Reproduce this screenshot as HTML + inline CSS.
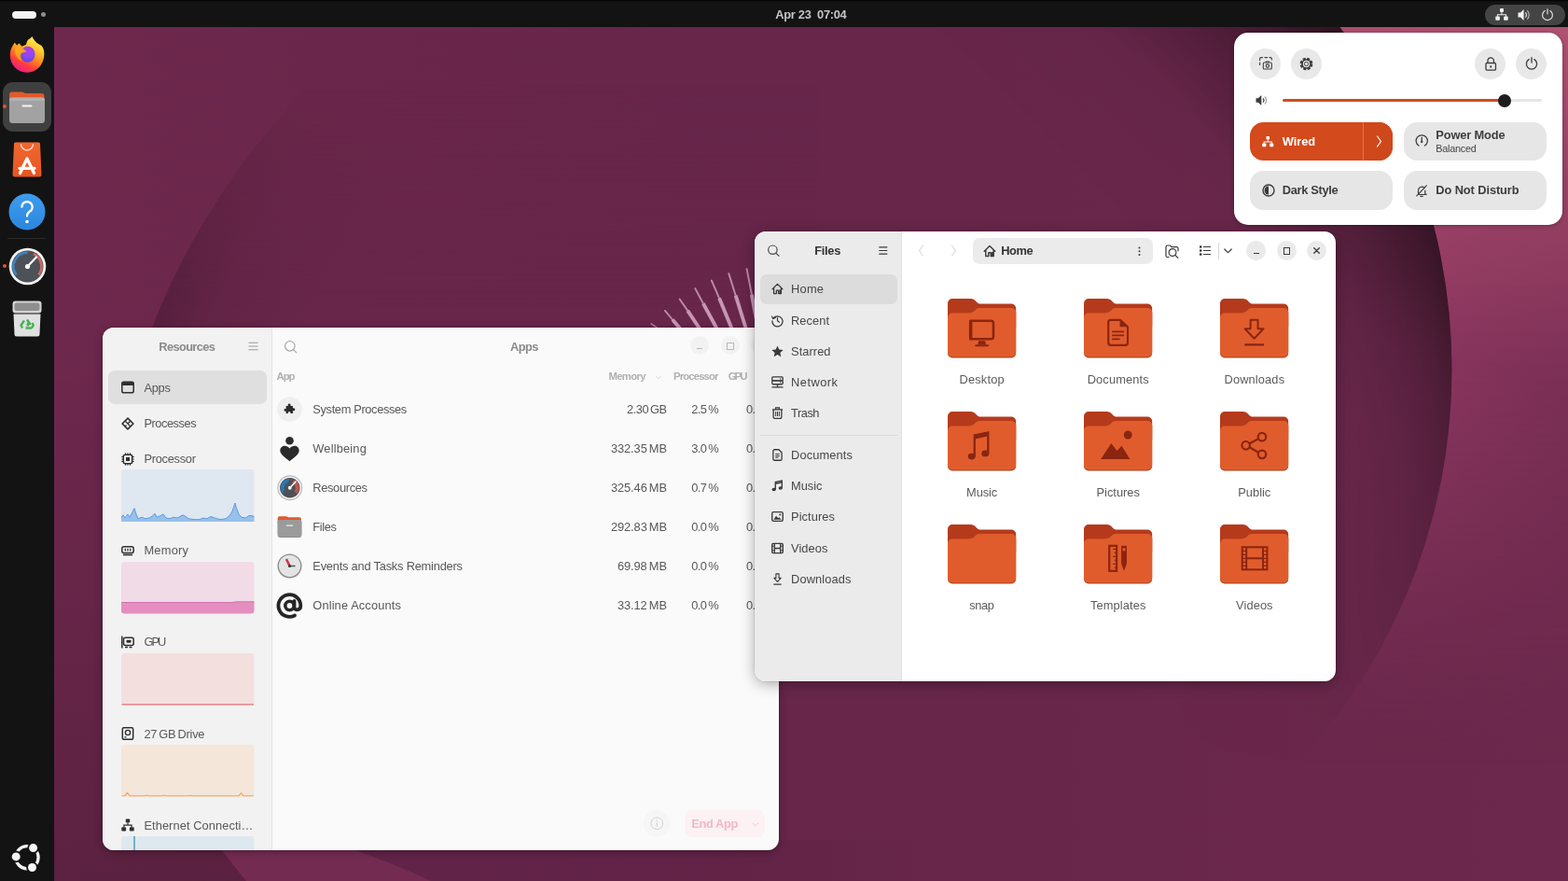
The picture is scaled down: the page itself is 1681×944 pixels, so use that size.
<!DOCTYPE html>
<html lang="en"><head><meta charset="utf-8"><title>Ubuntu Desktop</title>
<style>
html,body{margin:0;padding:0}
body{width:1681px;height:944px;overflow:hidden;position:relative;background:#67264a;font-family:"Liberation Sans",sans-serif;}
.a{position:absolute}
.t{position:absolute;white-space:pre}
svg{position:absolute;overflow:visible}
.win{position:absolute;overflow:hidden}
.in{position:absolute}
#root{position:absolute;left:0;top:0;width:1681px;height:944px;overflow:hidden;will-change:transform}
</style></head><body><div id="root">
<svg class="a" style="left:0;top:0" width="1681" height="944" viewBox="0 0 1681 944">
<defs>
<radialGradient id="gOut" gradientUnits="userSpaceOnUse" cx="935" cy="396" r="1000">
<stop offset="0.6215" stop-color="#8b365f"/><stop offset="0.68" stop-color="#84335a"/><stop offset="0.80" stop-color="#772d53"/><stop offset="1" stop-color="#6e294e"/>
</radialGradient>
<linearGradient id="gOutTop" gradientUnits="userSpaceOnUse" x1="1681" y1="0" x2="1560" y2="380">
<stop offset="0" stop-color="#c45e7a" stop-opacity="0.8"/><stop offset="1" stop-color="#c05a78" stop-opacity="0"/>
</linearGradient>
<radialGradient id="gIn" gradientUnits="userSpaceOnUse" cx="935" cy="396" r="621.5">
<stop offset="0" stop-color="#000" stop-opacity="0"/><stop offset="0.72" stop-color="#000" stop-opacity="0"/><stop offset="0.84" stop-color="#000" stop-opacity="0.055"/><stop offset="0.92" stop-color="#000" stop-opacity="0.15"/><stop offset="0.97" stop-color="#000" stop-opacity="0.26"/><stop offset="1" stop-color="#000" stop-opacity="0.36"/>
</radialGradient>
<linearGradient id="gRm" gradientUnits="userSpaceOnUse" x1="0" y1="0" x2="0" y2="1000">
<stop offset="0" stop-color="#fff" stop-opacity="1"/><stop offset="0.30" stop-color="#fff" stop-opacity="1"/><stop offset="0.45" stop-color="#fff" stop-opacity="0.78"/><stop offset="0.56" stop-color="#fff" stop-opacity="0.5"/><stop offset="0.66" stop-color="#fff" stop-opacity="0.25"/><stop offset="0.74" stop-color="#fff" stop-opacity="0.08"/><stop offset="0.82" stop-color="#fff" stop-opacity="0"/>
</linearGradient>
<mask id="mR" maskUnits="userSpaceOnUse" x="0" y="0" width="1681" height="944"><rect x="0" y="0" width="1681" height="944" fill="url(#gRm)"/></mask>
<radialGradient id="gL" gradientUnits="userSpaceOnUse" cx="877" cy="631" r="767">
<stop offset="0" stop-color="#000" stop-opacity="0"/><stop offset="0.80" stop-color="#000" stop-opacity="0"/><stop offset="0.93" stop-color="#000" stop-opacity="0.06"/><stop offset="1" stop-color="#000" stop-opacity="0.17"/>
</radialGradient>
<linearGradient id="gLm" gradientUnits="userSpaceOnUse" x1="0" y1="90" x2="0" y2="330">
<stop offset="0" stop-color="#fff" stop-opacity="0"/><stop offset="1" stop-color="#fff" stop-opacity="1"/>
</linearGradient>
<mask id="mL" maskUnits="userSpaceOnUse" x="0" y="0" width="1681" height="944"><rect x="0" y="0" width="1681" height="944" fill="url(#gLm)"/></mask>
<linearGradient id="gLeft" gradientUnits="userSpaceOnUse" x1="58" y1="0" x2="758" y2="0"><stop offset="0" stop-color="#6e284d"/><stop offset="0.4" stop-color="#6b274b"/><stop offset="1" stop-color="#67264a"/></linearGradient>
<linearGradient id="gBot" gradientUnits="userSpaceOnUse" x1="452" y1="0" x2="1000" y2="0"><stop offset="0" stop-color="#612347"/><stop offset="0.6" stop-color="#622347"/><stop offset="1" stop-color="#67264a"/></linearGradient>
<linearGradient id="gStrip" gradientUnits="userSpaceOnUse" x1="0" y1="300" x2="0" y2="944"><stop offset="0" stop-color="#000" stop-opacity="0"/><stop offset="0.15" stop-color="#000" stop-opacity="0.01"/><stop offset="0.6" stop-color="#000" stop-opacity="0.08"/><stop offset="1" stop-color="#000" stop-opacity="0.165"/></linearGradient>
<clipPath id="cTop"><rect x="0" y="0" width="1681" height="400"/></clipPath>
<linearGradient id="gLfill" gradientUnits="userSpaceOnUse" x1="58" y1="0" x2="758" y2="0"><stop offset="0" stop-color="#69264b"/><stop offset="0.5" stop-color="#67264a"/><stop offset="1" stop-color="#67264a"/></linearGradient>
<linearGradient id="gTopSh" gradientUnits="userSpaceOnUse" x1="1120" y1="160" x2="1320" y2="-40"><stop offset="0" stop-color="#000" stop-opacity="0"/><stop offset="0.4" stop-color="#000" stop-opacity="0.02"/><stop offset="0.7" stop-color="#000" stop-opacity="0.10"/><stop offset="1" stop-color="#000" stop-opacity="0.20"/></linearGradient>
<linearGradient id="gBR" gradientUnits="userSpaceOnUse" x1="1000" y1="0" x2="1681" y2="0"><stop offset="0" stop-color="#67264a"/><stop offset="1" stop-color="#6d294d"/></linearGradient>
<radialGradient id="gIn2" gradientUnits="userSpaceOnUse" cx="935" cy="396" r="621.5"><stop offset="0.70" stop-color="#000" stop-opacity="0"/><stop offset="0.82" stop-color="#000" stop-opacity="0.08"/><stop offset="0.93" stop-color="#000" stop-opacity="0.13"/><stop offset="1" stop-color="#000" stop-opacity="0.10"/></radialGradient>
<linearGradient id="gTm" gradientUnits="userSpaceOnUse" x1="0" y1="0" x2="0" y2="460"><stop offset="0" stop-color="#fff" stop-opacity="1"/><stop offset="0.5" stop-color="#fff" stop-opacity="1"/><stop offset="0.72" stop-color="#fff" stop-opacity="0.5"/><stop offset="1" stop-color="#fff" stop-opacity="0"/></linearGradient>
<mask id="mTop" maskUnits="userSpaceOnUse" x="0" y="0" width="1681" height="944"><rect x="0" y="0" width="1681" height="460" fill="url(#gTm)"/></mask>
<clipPath id="cOut"><path clip-rule="evenodd" d="M935 -300H1800V1100H935Z M935 -225.5 A621.5 621.5 0 0 1 935 1017.5 Z"/></clipPath>
</defs>
<rect width="1681" height="944" fill="#67264a"/>
<rect x="1000" y="0" width="681" height="944" fill="url(#gBR)"/>
<rect x="58" y="29" width="700" height="915" fill="url(#gLeft)"/>
<g mask="url(#mL)" clip-path="url(#cTop)"><path d="M877 -136A767 767 0 0 0 110 631H877Z" fill="url(#gLfill)"/><path d="M877 -136A767 767 0 0 0 110 631H877Z" fill="url(#gL)"/></g>
<rect x="58" y="300" width="300" height="644" fill="url(#gStrip)"/>
<path d="M229 900C241 915 254 932 264 944H462C425 926 380 910 345 900Z" fill="#742b52"/>
<path d="M345 900C380 910 425 926 462 944H1000V900Z" fill="url(#gBot)"/>
<g mask="url(#mR)">
<g clip-path="url(#cOut)"><rect x="935" y="0" width="746" height="944" fill="url(#gOut)"/><rect x="935" y="0" width="746" height="944" fill="url(#gOutTop)"/></g>
<path d="M935 -225.5 A621.5 621.5 0 0 1 935 1017.5 Z" fill="url(#gIn)"/>
<path d="M935 -225.5 A621.5 621.5 0 0 1 935 1017.5 Z" fill="url(#gTopSh)"/>
<g mask="url(#mTop)"><path d="M935 -225.5 A621.5 621.5 0 0 1 935 1017.5 Z" fill="url(#gIn2)"/></g>
</g>
<g stroke-linecap="round"><line x1="698.1" y1="346.8" x2="705" y2="351.5" stroke="#b583a3" stroke-width="1.400"/><line x1="712.9" y1="332.9" x2="721" y2="342.5" stroke="#be8aab" stroke-width="1.900"/><line x1="721" y1="342.5" x2="729" y2="352" stroke="#c696b4" stroke-width="3.900" stroke-linecap="butt"/><line x1="728.6" y1="320.5" x2="737.2" y2="332.9" stroke="#be8aab" stroke-width="1.900"/><line x1="737.2" y1="332.9" x2="750" y2="352" stroke="#c696b4" stroke-width="3.900" stroke-linecap="butt"/><line x1="745.3" y1="309.1" x2="753.9" y2="325.3" stroke="#be8aab" stroke-width="1.900"/><line x1="753.9" y1="325.3" x2="768.5" y2="352" stroke="#c696b4" stroke-width="3.900" stroke-linecap="butt"/><line x1="762.8" y1="300.5" x2="771.1" y2="319.6" stroke="#be8aab" stroke-width="1.900"/><line x1="771.1" y1="319.6" x2="784.5" y2="352" stroke="#c696b4" stroke-width="3.900" stroke-linecap="butt"/><line x1="781.3" y1="293.1" x2="788.7" y2="316.7" stroke="#be8aab" stroke-width="1.900"/><line x1="788.7" y1="316.7" x2="799.7" y2="352" stroke="#c696b4" stroke-width="3.900" stroke-linecap="butt"/><line x1="800.6" y1="288.1" x2="805.9" y2="315.8" stroke="#be8aab" stroke-width="1.900"/><line x1="805.9" y1="315.8" x2="812.5" y2="351" stroke="#c696b4" stroke-width="3.900" stroke-linecap="butt"/></g>
</svg>
<div class="a" style="left:0;top:0;width:1681px;height:29px;background:#131313"></div>
<div class="a" style="left:0;top:0;width:1681px;height:2px;background:linear-gradient(#000,#131313)"></div>
<div class="a" style="left:13px;top:12px;width:25.5px;height:7.5px;border-radius:4px;background:#f4f4f4"></div>
<div class="a" style="left:43.8px;top:13.2px;width:5px;height:5px;border-radius:3px;background:#8e8e8e"></div>
<span class="t" style="left:831.25px;top:8px;font-size:12.84px;line-height:15px;color:#c4c4c4;font-weight:700;letter-spacing:-0.281px;">Apr 23  07:04</span>
<div class="a" style="left:1592px;top:4.5px;width:85.5px;height:22.5px;border-radius:11.5px;background:#444"></div>
<svg class="a" style="left:1602px;top:8px" width="16" height="15" viewBox="0 0 16 15" fill="#f2f2f2">
<rect x="6" y="1" width="4" height="4" rx="1"/><rect x="1.3" y="9.5" width="4.6" height="4.2" rx="0.8"/><rect x="10.1" y="9.5" width="4.6" height="4.2" rx="0.8"/>
<path d="M7.5 5h1v2.3h4.6v2.4h-1V8.3H3.9v1.4h-1V7.3h4.6z"/></svg>
<svg class="a" style="left:1627px;top:8.5px" width="15" height="14" viewBox="0 0 15 14" fill="#f2f2f2">
<path d="M0.5 4.6h2.6L6.6 1v12L3.1 9.4H0.5z"/><path d="M8.3 4.4a3.6 3.6 0 0 1 0 5.2" fill="none" stroke="#f2f2f2" stroke-width="1.1"/><path d="M10.3 2.4a6.4 6.4 0 0 1 0 9.2" fill="none" stroke="#bdbdbd" stroke-width="1.1"/></svg>
<svg class="a" style="left:1652px;top:8.5px" width="14" height="14" viewBox="0 0 14 14" fill="none" stroke="#e0e0e0" stroke-width="1.2" stroke-linecap="round">
<path d="M4.2 2.6a5.4 5.4 0 1 0 5.6 0"/><path d="M7 0.8v5.2"/></svg>

<div class="a" style="left:0;top:29px;width:58px;height:915px;background:#131313"></div>
<!-- firefox -->
<svg class="a" style="left:9px;top:38px" width="40" height="40" viewBox="0 0 40 40">
<defs><linearGradient id="ffa" x1="0.78" y1="0.05" x2="0.3" y2="1"><stop offset="0" stop-color="#fff44f"/><stop offset="0.28" stop-color="#ffc52e"/><stop offset="0.52" stop-color="#ff8a1c"/><stop offset="0.76" stop-color="#ff3d3d"/><stop offset="1" stop-color="#e81a8c"/></linearGradient>
<radialGradient id="ffb" cx="0.55" cy="0.25" r="0.85"><stop offset="0" stop-color="#bb36e4"/><stop offset="0.45" stop-color="#8b4cf2"/><stop offset="1" stop-color="#5a40dd"/></radialGradient>
<linearGradient id="ffc" x1="0" y1="0" x2="1" y2="1"><stop offset="0" stop-color="#ffb01f"/><stop offset="1" stop-color="#ff8a16"/></linearGradient></defs>
<path d="M25.3 0.900C27 4 28.500 6 30.400 7.900C32 9 34 9.500 35.500 11.100C37.500 13.500 38.400 16 38.400 19.500C38.400 31 30.500 39.700 20 39.700C9.500 39.700 1.800 31.500 1.800 21C1.800 16 3.500 12 6.900 7.600C7.500 9 8.300 10 9.400 10.600C10 9.600 11 8.800 12 8.500C12.600 9.800 13.500 11 14.500 11.700C16 11.200 17.600 10.600 19 9.800C19.400 7.500 20.300 5.800 20.900 4.700C22.500 3.800 24.200 2.500 25.300 0.900Z" fill="url(#ffa)"/>
<ellipse cx="20.800" cy="20.200" rx="7.700" ry="8.600" fill="url(#ffb)"/>
<path d="M7.500 13C11 11.500 14.500 12.500 16.500 14.800L19.800 17.300C17 17.700 14.300 18.600 13.300 20.300C12.300 22.300 12.800 24.800 14.500 27C9.500 26 6 20.500 7.500 13Z" fill="url(#ffc)"/>
</svg>
<!-- files (active) -->
<div class="a" style="left:2.5px;top:88px;width:52.5px;height:52.5px;border-radius:11px;background:#3f3f3f"></div>
<div class="a" style="left:3.3px;top:112.4px;width:4px;height:4px;border-radius:2px;background:#e2572a"></div>
<svg class="a" style="left:9px;top:97px" width="40" height="36" viewBox="0 0 40 36">
<path d="M1 4.500a3 3 0 0 1 3-3h10.500c1.500 0 2.500 1.500 4 1.500h17a3 3 0 0 1 3 3v6H1Z" fill="#e2592b"/>
<rect x="1" y="7.600" width="38" height="27.400" rx="3.500" fill="#a2a2a2"/>
<rect x="1" y="7.600" width="38" height="3.500" rx="1.700" fill="#bdbdbd" opacity="0.6"/>
<rect x="14.500" y="15.500" width="11" height="2" rx="1" fill="#f4f4f4"/>
</svg>
<!-- app center -->
<svg class="a" style="left:13px;top:152px" width="32" height="38" viewBox="0 0 32 38">
<defs><linearGradient id="ac" x1="0" y1="0" x2="0" y2="1"><stop offset="0" stop-color="#f0682f"/><stop offset="1" stop-color="#e95420"/></linearGradient></defs>
<path d="M3.500 0.500h25a1.500 1.500 0 0 1 1.500 1.500l1.500 33a2.500 2.500 0 0 1-2.500 2.500H3a2.500 2.500 0 0 1-2.500-2.500L2 2a1.500 1.500 0 0 1 1.500-1.500Z" fill="url(#ac)"/>
<path d="M9.500 2.500a6.500 6.500 0 0 0 13 0" fill="none" stroke="#fbe3d6" stroke-width="1.400"/>
<path d="M16 18L8.500 33.500M16 18L23.500 33.500M8 28.300h16" fill="none" stroke="#fff" stroke-width="3.300" stroke-linecap="round"/>
</svg>
<!-- help -->
<svg class="a" style="left:9px;top:207px" width="40" height="40" viewBox="0 0 40 40">
<defs><linearGradient id="hp" x1="0" y1="0" x2="0" y2="1"><stop offset="0" stop-color="#3f9dec"/><stop offset="1" stop-color="#2a86de"/></linearGradient></defs>
<circle cx="20" cy="20" r="19.500" fill="url(#hp)"/>
<path d="M14.500 14.500a5.600 5.600 0 1 1 8.500 5c-2 1.300-3 2.500-3 5" fill="none" stroke="#fff" stroke-width="2.300" stroke-linecap="round"/>
<circle cx="20" cy="30.500" r="1.800" fill="#fff"/>
</svg>
<div class="a" style="left:8px;top:255px;width:41px;height:1px;background:#292929"></div>
<!-- resources -->
<div class="a" style="left:3.3px;top:283.400px;width:4px;height:4px;border-radius:2px;background:#e2572a"></div>
<svg class="a" style="left:8.500px;top:265px" width="41" height="41" viewBox="0 0 41 41">
<circle cx="20.500" cy="20.500" r="19.800" fill="#f2f2f2"/>
<circle cx="20.500" cy="20.500" r="17" fill="#4d5258"/>
<path d="M8.500 29.500A15 15 0 0 1 20.500 5.500" fill="none" stroke="#3d86c0" stroke-width="2.600"/>
<path d="M27 7A15 15 0 0 1 32.500 29.500" fill="none" stroke="#cf6a60" stroke-width="2.600"/>
<path d="M20.500 20.500L30 10.500" stroke="#fff" stroke-width="2.200" stroke-linecap="round"/>
<circle cx="20.500" cy="20.500" r="2.600" fill="#fff"/>
</svg>
<!-- trash -->
<svg class="a" style="left:13px;top:322px" width="32" height="39" viewBox="0 0 32 39">
<rect x="0.500" y="0.500" width="31" height="13" rx="3" fill="#d4d4d4"/>
<rect x="2.500" y="2.500" width="27" height="8.500" rx="2.500" fill="#8f8f8f"/>
<path d="M1.500 14.500h29l-1 21.500a2.500 2.500 0 0 1-2.500 2.500H5a2.500 2.500 0 0 1-2.500-2.500Z" fill="#e0e0e0"/>
<path d="M16 20.500l3 4.500h-2.200v2.500M11 29.500l-1.500-3 3.500-5M21 29.500h-6.500M21 29.500l1.800-3-1.500-2.300" fill="none" stroke="#43b352" stroke-width="2.400" stroke-linejoin="round"/>
</svg>
<!-- show apps (ubuntu logo) -->
<svg class="a" style="left:12px;top:902px" width="34" height="34" viewBox="0 0 34 34">
<circle cx="17" cy="16.700" r="12.100" fill="none" stroke="#f4f4f4" stroke-width="3.300"/>
<g fill="#131313"><circle cx="23.600" cy="6.600" r="6.300"/><circle cx="5.200" cy="15.900" r="6.300"/><circle cx="22.500" cy="27.500" r="6.300"/></g>
<g fill="#f4f4f4"><circle cx="23.600" cy="6.600" r="4.500"/><circle cx="5.200" cy="15.900" r="4.500"/><circle cx="22.500" cy="27.500" r="4.500"/></g>
</svg>

<div class="a" style="left:110px;top:351px;width:725px;height:560px;border-radius:12px;box-shadow:0 2px 10px rgba(0,0,0,.28),0 0 0 1px rgba(0,0,0,.10)"></div>
<div class="win" style="left:110px;top:351px;width:725px;height:560px;border-radius:12px;background:#fafafa"><div class="in" style="left:-110px;top:-351px">
<div class="a" style="left:110px;top:351px;width:181px;height:560px;background:#f2f2f2"></div>
<div class="a" style="left:290.5px;top:351px;width:1px;height:560px;background:#e4e4e4"></div>
<span class="t" style="left:170.35px;top:364px;font-size:12.84px;line-height:15px;color:#8a8a8a;font-weight:700;letter-spacing:-0.639px;">Resources</span>
<svg style="left:265.5px;top:365.5px" width="11" height="10" viewBox="0 0 11 10"><path d="M0.5 1.2h10M0.5 5h10M0.5 8.800h10" stroke="#9c9c9c" stroke-width="1.100"/></svg>
<svg style="left:303.500px;top:363.500px" width="15" height="15" viewBox="0 0 15 15" fill="none" stroke="#a6a6a6" stroke-width="1.200"><circle cx="6.800" cy="6.800" r="5.300"/><path d="M10.600 10.600l3.200 3.200" stroke-linecap="round"/></svg>
<span class="t" style="left:546.95px;top:364px;font-size:12.84px;line-height:15px;color:#8a8a8a;font-weight:700;letter-spacing:-0.526px;">Apps</span>
<div class="a" style="left:740px;top:360.300px;width:20px;height:20px;border-radius:10px;background:#f2f2f2"></div>
<div class="a" style="left:772.5px;top:360.300px;width:20px;height:20px;border-radius:10px;background:#f2f2f2"></div>
<div class="a" style="left:805px;top:360.300px;width:20px;height:20px;border-radius:10px;background:#f2f2f2"></div>
<div class="a" style="left:746.500px;top:372.800px;width:6.500px;height:1px;background:#b8b8b8"></div>
<div class="a" style="left:779.200px;top:367px;width:5.500px;height:5.500px;border:1px solid #b8b8b8;box-sizing:content-box"></div>
<div class="a" style="left:116px;top:397px;width:170px;height:36px;border-radius:7px;background:#dfdfdf"></div>
<svg style="left:129.500px;top:408px" width="14" height="14" viewBox="0 0 14 14"><rect x="0.800" y="1.300" width="12.400" height="11.400" rx="1.800" fill="none" stroke="#2f2f2f" stroke-width="1.500"/><rect x="0.800" y="1.300" width="12.400" height="3.600" rx="1" fill="#2f2f2f"/></svg>
<span class="t" style="left:154.40px;top:408px;font-size:12.84px;line-height:15px;color:#585858;letter-spacing:-0.250px;">Apps</span>
<svg style="left:129.500px;top:446.500px" width="14" height="14" viewBox="0 0 14 14"><path d="M7 1.100L12.900 7 7 12.900 1.100 7Z" fill="none" stroke="#2f2f2f" stroke-width="1.600" stroke-linejoin="round"/><path d="M4.300 4.300l5.400 5.400M9.700 4.300L7 7M4.300 9.700L5.500 8.500" stroke="#2f2f2f" stroke-width="1.300"/></svg>
<span class="t" style="left:154.40px;top:446px;font-size:12.84px;line-height:15px;color:#585858;letter-spacing:-0.461px;">Processes</span>
<svg style="left:129.500px;top:485px" width="14" height="14" viewBox="0 0 14 14"><rect x="2.300" y="2.300" width="9.400" height="9.400" rx="2" fill="none" stroke="#2f2f2f" stroke-width="1.500"/><rect x="5" y="5" width="4" height="4" fill="#2f2f2f"/><path d="M4.500 0.300v2M7 0.300v2M9.500 0.300v2M4.500 11.700v2M7 11.700v2M9.500 11.700v2M0.300 4.500h2M0.300 7h2M0.300 9.500h2M11.700 4.500h2M11.700 7h2M11.700 9.500h2" stroke="#2f2f2f" stroke-width="1"/></svg>
<span class="t" style="left:154.40px;top:484px;font-size:12.84px;line-height:15px;color:#585858;letter-spacing:-0.269px;">Processor</span>
<svg style="left:129.500px;top:583px" width="14" height="14" viewBox="0 0 14 14"><rect x="0.800" y="2.800" width="12.400" height="6.600" rx="2" fill="none" stroke="#2f2f2f" stroke-width="1.500"/><path d="M4.300 4.800v2.600M7 4.800v2.600M9.700 4.800v2.600" stroke="#2f2f2f" stroke-width="1.300"/><path d="M2 11.500h10" stroke="#2f2f2f" stroke-width="1.600"/></svg>
<span class="t" style="left:154.40px;top:582px;font-size:12.84px;line-height:15px;color:#585858;letter-spacing:0.254px;">Memory</span>
<svg style="left:129.500px;top:681px" width="14" height="14" viewBox="0 0 14 14"><path d="M0.800 0.500v13" stroke="#2f2f2f" stroke-width="1.500"/><rect x="2.500" y="2.300" width="10.700" height="8.200" rx="2" fill="none" stroke="#2f2f2f" stroke-width="1.500"/><rect x="5.500" y="4.800" width="5" height="3" rx="0.800" fill="#2f2f2f"/><path d="M4 12.500h3M8.500 12.500h3" stroke="#2f2f2f" stroke-width="1.500"/></svg>
<span class="t" style="left:154.40px;top:680px;font-size:12.84px;line-height:15px;color:#585858;letter-spacing:-1.906px;">GPU</span>
<svg style="left:129.500px;top:779px" width="14" height="14" viewBox="0 0 14 14"><rect x="1.300" y="0.800" width="11.400" height="12.400" rx="1.500" fill="none" stroke="#2f2f2f" stroke-width="1.500"/><circle cx="7" cy="6" r="2.600" fill="none" stroke="#2f2f2f" stroke-width="1.400"/><path d="M3.500 10.800h2" stroke="#2f2f2f" stroke-width="1.300"/></svg>
<span class="t" style="left:154.40px;top:779px;font-size:12.84px;line-height:15px;color:#585858;letter-spacing:-0.287px;word-spacing:-1px;">27 GB Drive</span>
<svg style="left:129.500px;top:877px" width="14" height="14" viewBox="0 0 14 14" fill="#2f2f2f"><rect x="4.800" y="0.500" width="4.400" height="4" rx="0.800"/><rect x="0.300" y="9.300" width="4.800" height="4.200" rx="0.800"/><rect x="8.900" y="9.300" width="4.800" height="4.200" rx="0.800"/><path d="M6.400 4.500h1.200v2h4.100v2.800h-1.200V7.700H3.500v1.600H2.300V6.500h4.100z"/></svg>
<span class="t" style="left:154.40px;top:877px;font-size:12.84px;line-height:15px;color:#585858;letter-spacing:0.086px;">Ethernet Connecti…</span>
<svg style="left:129.500px;top:503px" width="142.500" height="56" viewBox="0 0 142.500 56"><rect width="142.500" height="56" rx="3.500" fill="#dfe7f1"/><path d="M0,51.2 L2,48.8 L4,52.0 L7,48.0 L9,51.2 L12,45.6 L14,41.6 L16,48.0 L18,52.8 L22,51.2 L26,52.8 L30,52.0 L34,49.6 L36,47.2 L38,51.2 L42,49.6 L45,48.0 L48,52.0 L52,52.8 L56,51.2 L60,52.0 L63,50.4 L66,48.8 L69,50.4 L72,52.8 L78,53.6 L84,53.6 L88,52.0 L92,52.8 L96,50.4 L100,52.0 L106,53.6 L112,52.8 L116,49.6 L119,44.8 L122,36.0 L123,40.0 L126,48.0 L129,51.2 L133,52.0 L137,49.6 L140,49.6 L142.5,50.4 L142.500,56 L0,56Z" fill="#8fbbe9" opacity="0.9"/><polyline points="0,51.2 2,48.8 4,52.0 7,48.0 9,51.2 12,45.6 14,41.6 16,48.0 18,52.8 22,51.2 26,52.8 30,52.0 34,49.6 36,47.2 38,51.2 42,49.6 45,48.0 48,52.0 52,52.8 56,51.2 60,52.0 63,50.4 66,48.8 69,50.4 72,52.8 78,53.6 84,53.6 88,52.0 92,52.8 96,50.4 100,52.0 106,53.6 112,52.8 116,49.6 119,44.8 122,36.0 123,40.0 126,48.0 129,51.2 133,52.0 137,49.6 140,49.6 142.5,50.4" fill="none" stroke="#5c9ee0" stroke-width="1"/></svg>
<svg style="left:129.500px;top:601.5px" width="142.500" height="55.5" viewBox="0 0 142.500 55.5"><rect width="142.500" height="55.5" rx="3.500" fill="#f1dbe6"/><path d="M0 43.500H118L124 42.800H142.500V52a3.500 3.500 0 0 1-3.500 3.500H3.500A3.500 3.500 0 0 1 0 52Z" fill="#e58fc1"/><path d="M0 43.500H118L124 42.800H142.500" fill="none" stroke="#cf72ad" stroke-width="1"/></svg>
<svg style="left:129.500px;top:699.5px" width="142.500" height="56" viewBox="0 0 142.500 56"><rect width="142.500" height="56" rx="3.500" fill="#f4dfdf"/><path d="M0.500 54.800H142" fill="none" stroke="#e0747c" stroke-width="1.200"/></svg>
<svg style="left:129.500px;top:797.5px" width="142.500" height="56" viewBox="0 0 142.500 56"><rect width="142.500" height="56" rx="3.500" fill="#f5e6da"/><path d="M0.500 54.700H4L6.500 51.500 9 54.700H25L27 54 29 54.700H44L46 54 48 54.700H72L74 54.200 76 54.700H126L128.500 51.800 131 54.700H142" fill="none" stroke="#f0a458" stroke-width="1.100"/></svg>
<svg style="left:129.500px;top:895.5px" width="142.500" height="56" viewBox="0 0 142.500 56"><rect width="142.500" height="56" rx="3.500" fill="#dde9ee"/><path d="M14 0V20" stroke="#2c8fb4" stroke-width="1.200"/></svg>
<span class="t" style="left:296.50px;top:397px;font-size:11.3px;line-height:12px;color:#b0b0b0;font-weight:700;letter-spacing:-0.984px;">App</span>
<span class="t" style="left:652.50px;top:397px;font-size:11.3px;line-height:12px;color:#b0b0b0;font-weight:700;letter-spacing:-0.666px;">Memory</span>
<svg style="left:701.500px;top:402px" width="8" height="5" viewBox="0 0 8 5"><path d="M0.800 0.800L4 4 7.200 0.800" fill="none" stroke="#dcdcdc" stroke-width="1"/></svg>
<span class="t" style="left:722.00px;top:397px;font-size:11.3px;line-height:12px;color:#b0b0b0;font-weight:700;letter-spacing:-0.846px;">Processor</span>
<span class="t" style="left:780.80px;top:397px;font-size:11.3px;line-height:12px;color:#b0b0b0;font-weight:700;letter-spacing:-1.992px;">GPU</span>
<span class="t" style="left:335.30px;top:431px;font-size:12.84px;line-height:15px;color:#585858;letter-spacing:-0.349px;">System Processes</span>
<span class="t" style="left:672.00px;top:431px;font-size:12.84px;line-height:15px;color:#585858;letter-spacing:-0.464px;word-spacing:-1.3px;">2.30 GB</span>
<span class="t" style="left:741.30px;top:431px;font-size:12.84px;line-height:15px;color:#585858;letter-spacing:-0.628px;word-spacing:-1px;">2.5 %</span>
<span class="t" style="left:800.00px;top:431px;font-size:12.84px;line-height:15px;color:#585858;letter-spacing:-0.628px;word-spacing:-1px;">0.0 %</span>
<span class="t" style="left:335.30px;top:473px;font-size:12.84px;line-height:15px;color:#585858;letter-spacing:0.174px;">Wellbeing</span>
<span class="t" style="left:655.00px;top:473px;font-size:12.84px;line-height:15px;color:#585858;letter-spacing:-0.094px;word-spacing:-1.3px;">332.35 MB</span>
<span class="t" style="left:741.30px;top:473px;font-size:12.84px;line-height:15px;color:#585858;letter-spacing:-0.628px;word-spacing:-1px;">3.0 %</span>
<span class="t" style="left:800.00px;top:473px;font-size:12.84px;line-height:15px;color:#585858;letter-spacing:-0.628px;word-spacing:-1px;">0.0 %</span>
<span class="t" style="left:335.30px;top:515px;font-size:12.84px;line-height:15px;color:#585858;letter-spacing:-0.329px;">Resources</span>
<span class="t" style="left:655.00px;top:515px;font-size:12.84px;line-height:15px;color:#585858;letter-spacing:-0.094px;word-spacing:-1.3px;">325.46 MB</span>
<span class="t" style="left:741.30px;top:515px;font-size:12.84px;line-height:15px;color:#585858;letter-spacing:-0.628px;word-spacing:-1px;">0.7 %</span>
<span class="t" style="left:800.00px;top:515px;font-size:12.84px;line-height:15px;color:#585858;letter-spacing:-0.628px;word-spacing:-1px;">0.0 %</span>
<span class="t" style="left:335.30px;top:557px;font-size:12.84px;line-height:15px;color:#585858;letter-spacing:-0.348px;">Files</span>
<span class="t" style="left:655.00px;top:557px;font-size:12.84px;line-height:15px;color:#585858;letter-spacing:-0.094px;word-spacing:-1.3px;">292.83 MB</span>
<span class="t" style="left:741.30px;top:557px;font-size:12.84px;line-height:15px;color:#585858;letter-spacing:-0.628px;word-spacing:-1px;">0.0 %</span>
<span class="t" style="left:800.00px;top:557px;font-size:12.84px;line-height:15px;color:#585858;letter-spacing:-0.628px;word-spacing:-1px;">0.0 %</span>
<span class="t" style="left:335.30px;top:599px;font-size:12.84px;line-height:15px;color:#585858;letter-spacing:-0.208px;">Events and Tasks Reminders</span>
<span class="t" style="left:662.00px;top:599px;font-size:12.84px;line-height:15px;color:#585858;letter-spacing:-0.087px;word-spacing:-1.3px;">69.98 MB</span>
<span class="t" style="left:741.30px;top:599px;font-size:12.84px;line-height:15px;color:#585858;letter-spacing:-0.628px;word-spacing:-1px;">0.0 %</span>
<span class="t" style="left:800.00px;top:599px;font-size:12.84px;line-height:15px;color:#585858;letter-spacing:-0.628px;word-spacing:-1px;">0.0 %</span>
<span class="t" style="left:335.30px;top:641px;font-size:12.84px;line-height:15px;color:#585858;letter-spacing:0.128px;">Online Accounts</span>
<span class="t" style="left:662.00px;top:641px;font-size:12.84px;line-height:15px;color:#585858;letter-spacing:-0.087px;word-spacing:-1.3px;">33.12 MB</span>
<span class="t" style="left:741.30px;top:641px;font-size:12.84px;line-height:15px;color:#585858;letter-spacing:-0.628px;word-spacing:-1px;">0.0 %</span>
<span class="t" style="left:800.00px;top:641px;font-size:12.84px;line-height:15px;color:#585858;letter-spacing:-0.628px;word-spacing:-1px;">0.0 %</span>
<svg style="left:297.300px;top:425px" width="27" height="27" viewBox="0 0 27 27"><circle cx="13.500" cy="13.500" r="13.300" fill="#efefef"/><path transform="translate(13.5 14.2) scale(0.86) translate(-13.5 -13.5)" d="M9 8.500h2.600c-0.700-1.300 0-2.700 1.500-2.700s2.200 1.400 1.500 2.700h2.900v2.900c1.300-0.700 2.700 0 2.700 1.500s-1.400 2.200-2.700 1.500v3.600h-3c0.600-1.300-0.100-2.500-1.400-2.500s-2 1.200-1.400 2.500H9v-3c-1.300 0.600-2.500-0.100-2.500-1.400s1.200-2 2.500-1.400z" fill="#2b2b2b"/></svg>
<svg style="left:299.300px;top:466.500px" width="23" height="28" viewBox="0 0 23 28" fill="#2b2b2b"><circle cx="11.500" cy="5.300" r="4.300"/><path d="M11.500 27.300C7 23.500 1.300 20 1.300 15.800c0-3 2.300-5 5-5 2 0 3.900 1 5.200 2.700 1.300-1.700 3.200-2.700 5.200-2.700 2.700 0 5 2 5 5 0 4.200-5.700 7.700-10.200 11.500z"/></svg>
<svg style="left:297.100px;top:508.800px" width="27.500" height="27.500" viewBox="0 0 41 41"><circle cx="20.500" cy="20.500" r="20" fill="#b9b9b9"/><circle cx="20.500" cy="20.500" r="18.300" fill="#f2f2f2"/><circle cx="20.500" cy="20.500" r="16" fill="#4d5258"/><path d="M9 29.500A14.500 14.500 0 0 1 20.500 6z" fill="#2c78b0"/><path d="M27 7.500A14.500 14.500 0 0 1 32 29.500L20.500 20.500z" fill="#c7524a"/><circle cx="20.500" cy="20.500" r="9" fill="#4d5258"/><path d="M20.500 20.500L30 10.500" stroke="#fff" stroke-width="2.400" stroke-linecap="round"/><circle cx="20.500" cy="20.500" r="2.800" fill="#fff"/></svg>
<svg style="left:297.300px;top:552px" width="27" height="25" viewBox="0 0 40 36"><path d="M1 4.500a3 3 0 0 1 3-3h10.500c1.500 0 2.500 1.500 4 1.500h17a3 3 0 0 1 3 3v6H1Z" fill="#df5a2c"/><rect x="1" y="7" width="38" height="28" rx="3.500" fill="#8c8c8c"/><rect x="1" y="7" width="38" height="26.500" rx="3.500" fill="#9b9b9b"/><rect x="14.500" y="15" width="11" height="2" rx="1" fill="#eee"/></svg>
<svg style="left:297.300px;top:593px" width="27" height="27" viewBox="0 0 27 27"><circle cx="13.500" cy="13.500" r="13" fill="#8d8d8d"/><circle cx="13.500" cy="13.300" r="11.600" fill="#e4e4e4"/><path d="M13.500 13.500L10 6" stroke="#d0364a" stroke-width="2.600"/><path d="M13.500 13.500h6" stroke="#555" stroke-width="1.500"/><circle cx="13.500" cy="13.500" r="1.500" fill="#333"/></svg>
<svg style="left:296.300px;top:633.500px" width="29" height="30" viewBox="0 0 29 30" fill="none" stroke="#262626"><circle cx="14.500" cy="15" r="4.700" stroke-width="3.600"/><path d="M19.500 10v6.500c0 4 6.800 4 6.800-1.500A11.900 11.900 0 1 0 20 25.500" stroke-width="3.800" stroke-linecap="round"/></svg>
<div class="a" style="left:689.500px;top:868px;width:28.500px;height:28.500px;border-radius:15px;background:#f6f6f6"></div>
<svg style="left:696.500px;top:875px" width="14.500" height="14.500" viewBox="0 0 15 15"><circle cx="7.500" cy="7.500" r="6.600" fill="none" stroke="#d0d0d0" stroke-width="1"/><path d="M7.500 6.500v4.500" stroke="#d0d0d0" stroke-width="1.200"/><circle cx="7.500" cy="4.300" r="0.800" fill="#d0d0d0"/></svg>
<div class="a" style="left:733.700px;top:868px;width:86.500px;height:28.800px;border-radius:8px;background:#fcf1f3"></div>
<span class="t" style="left:741.30px;top:875px;font-size:12.84px;line-height:15px;color:#efb9c6;font-weight:700;letter-spacing:-0.378px;">End App</span>
<svg style="left:806px;top:880.500px" width="8" height="5" viewBox="0 0 8 5"><path d="M0.800 0.800L4 4 7.200 0.800" fill="none" stroke="#f0c9d2" stroke-width="1"/></svg>
</div></div>
<div class="a" style="left:809px;top:248.200px;width:623px;height:481.800px;border-radius:12px;box-shadow:0 3px 15px rgba(0,0,0,.32),0 0 0 1px rgba(0,0,0,.07)"></div>
<div class="win" style="left:809px;top:248.200px;width:623px;height:481.800px;border-radius:12px;background:#fff"><div class="in" style="left:-809px;top:-248.200px">
<div class="a" style="left:809px;top:248px;width:157.800px;height:483px;background:#ebebeb"></div>
<div class="a" style="left:966px;top:248px;width:1px;height:483px;background:#e2e2e2"></div>
<svg style="left:822px;top:261px" width="15" height="15" viewBox="0 0 15 15" fill="none" stroke="#4a4a4a" stroke-width="1.200"><circle cx="6.400" cy="6.700" r="4.700"/><path d="M9.800 10.100l3.200 3.100" stroke-linecap="round"/></svg>
<span class="t" style="left:873.30px;top:261px;font-size:12.84px;line-height:15px;color:#333;font-weight:700;letter-spacing:-0.309px;">Files</span>
<svg style="left:942px;top:264px" width="10" height="9" viewBox="0 0 10 9"><path d="M0.300 0.900h9M0.300 4.500h9M0.300 8.100h9" stroke="#3a3a3a" stroke-width="1.100"/></svg>
<div class="a" style="left:815px;top:294px;width:146.500px;height:31.500px;border-radius:7px;background:#dcdcdc"></div>
<svg style="left:827.200px;top:303.3px" width="13" height="13" viewBox="0 0 14 14"><path d="M1.200 7.300L7 1.500l5.800 5.800M2.800 6v6.500h3v-3.800h2.400v3.800h3V6" fill="none" stroke="#3a3a3a" stroke-width="1.400" stroke-linejoin="round" stroke-linecap="round"/><rect x="9" y="8" width="2.300" height="4.500" fill="#3a3a3a"/></svg>
<span class="t" style="left:848.00px;top:302px;font-size:12.84px;line-height:15px;color:#474747;letter-spacing:0.255px;">Home</span>
<svg style="left:827.200px;top:336.5px" width="13" height="13" viewBox="0 0 14 14"><path d="M2.200 4.300A6 6 0 1 1 1 7.500" fill="none" stroke="#3a3a3a" stroke-width="1.400" stroke-linecap="round"/><path d="M0.500 2.200l1.500 2.600 2.700-1" fill="none" stroke="#3a3a3a" stroke-width="1.300" stroke-linecap="round"/><path d="M7 3.800v3.500l2.200 1.500" fill="none" stroke="#3a3a3a" stroke-width="1.300" stroke-linecap="round"/></svg>
<span class="t" style="left:848.00px;top:336px;font-size:12.84px;line-height:15px;color:#474747;letter-spacing:0.069px;">Recent</span>
<svg style="left:827.200px;top:369.8px" width="13" height="13" viewBox="0 0 14 14"><path d="M7 0.600l1.950 4.300 4.650 0.500-3.500 3.100 1 4.600L7 10.700 2.900 13.100l1-4.600L0.400 5.400l4.650-0.500z" fill="#3a3a3a"/></svg>
<span class="t" style="left:848.00px;top:369px;font-size:12.84px;line-height:15px;color:#474747;letter-spacing:0.070px;">Starred</span>
<svg style="left:827.200px;top:403.0px" width="13" height="13" viewBox="0 0 14 14"><rect x="0.800" y="1" width="12.400" height="4.200" rx="1.200" fill="none" stroke="#3a3a3a" stroke-width="1.400"/><rect x="0.800" y="5.200" width="12.400" height="4.200" rx="1.200" fill="none" stroke="#3a3a3a" stroke-width="1.400"/><path d="M0.500 12.700h13M7 9.500v3" stroke="#3a3a3a" stroke-width="1.400"/><circle cx="10.500" cy="3.100" r="0.800" fill="#3a3a3a"/><circle cx="10.500" cy="7.300" r="0.800" fill="#3a3a3a"/></svg>
<span class="t" style="left:848.00px;top:402px;font-size:12.84px;line-height:15px;color:#474747;letter-spacing:0.490px;">Network</span>
<svg style="left:827.200px;top:436.3px" width="13" height="13" viewBox="0 0 14 14"><path d="M1 3h12M5 2.800V1h4v1.800" fill="none" stroke="#3a3a3a" stroke-width="1.400"/><path d="M2.300 3.200v8.600a1.500 1.500 0 0 0 1.500 1.500h6.400a1.500 1.500 0 0 0 1.500-1.500V3.200" fill="none" stroke="#3a3a3a" stroke-width="1.400"/><path d="M5 5.500v5.300M7 5.500v5.300M9 5.500v5.300" stroke="#3a3a3a" stroke-width="1.100"/></svg>
<span class="t" style="left:848.00px;top:435px;font-size:12.84px;line-height:15px;color:#474747;letter-spacing:-0.457px;">Trash</span>
<svg style="left:827.200px;top:481.0px" width="13" height="13" viewBox="0 0 14 14"><path d="M2 2.500A1.700 1.700 0 0 1 3.700 0.800H8.500L12 4.300v7.200a1.700 1.700 0 0 1-1.700 1.700H3.700A1.700 1.700 0 0 1 2 11.500Z" fill="none" stroke="#3a3a3a" stroke-width="1.400" stroke-linejoin="round"/><path d="M4.500 6h5M4.500 8h5M4.500 10h3.500" stroke="#3a3a3a" stroke-width="1.100"/></svg>
<span class="t" style="left:848.00px;top:480px;font-size:12.84px;line-height:15px;color:#474747;letter-spacing:0.139px;">Documents</span>
<svg style="left:827.200px;top:514.1px" width="13" height="13" viewBox="0 0 14 14"><path d="M4.600 11V2.800l7.600-1.600V9.500" fill="none" stroke="#3a3a3a" stroke-width="1.500"/><path d="M4.600 4.500l7.600-1.600" stroke="#3a3a3a" stroke-width="1.600"/><ellipse cx="2.900" cy="11.200" rx="2.300" ry="1.900" fill="#3a3a3a"/><ellipse cx="10.500" cy="9.700" rx="2.300" ry="1.900" fill="#3a3a3a"/></svg>
<span class="t" style="left:848.00px;top:513px;font-size:12.84px;line-height:15px;color:#474747;">Music</span>
<svg style="left:827.200px;top:547.3px" width="13" height="13" viewBox="0 0 14 14"><rect x="0.800" y="1.800" width="12.400" height="10.400" rx="1.600" fill="none" stroke="#3a3a3a" stroke-width="1.500"/><path d="M2.500 10.500l3-4.200 2.200 2.700 1.300-1.200 2.500 2.700z" fill="#3a3a3a"/><circle cx="10" cy="4.800" r="1.100" fill="#3a3a3a"/></svg>
<span class="t" style="left:848.00px;top:546px;font-size:12.84px;line-height:15px;color:#474747;letter-spacing:0.094px;">Pictures</span>
<svg style="left:827.200px;top:580.7px" width="13" height="13" viewBox="0 0 14 14"><rect x="0.800" y="1.500" width="12.400" height="11" rx="1.200" fill="none" stroke="#3a3a3a" stroke-width="1.500"/><path d="M3.600 1.500v11M10.400 1.500v11M3.600 7h6.800" stroke="#3a3a3a" stroke-width="1.400"/><path d="M0.800 4.500h2.800M0.800 9.500h2.800M10.400 4.500h2.800M10.400 9.500h2.800" stroke="#3a3a3a" stroke-width="1"/></svg>
<span class="t" style="left:848.00px;top:580px;font-size:12.84px;line-height:15px;color:#474747;letter-spacing:0.100px;">Videos</span>
<svg style="left:827.200px;top:614.0px" width="13" height="13" viewBox="0 0 14 14"><path d="M5.300 1h3.400v4.800h2.300L7 10 3 5.800h2.300z" fill="none" stroke="#3a3a3a" stroke-width="1.200" stroke-linejoin="round"/><path d="M2.500 13h9" stroke="#3a3a3a" stroke-width="1.400"/></svg>
<span class="t" style="left:848.00px;top:613px;font-size:12.84px;line-height:15px;color:#474747;letter-spacing:0.129px;">Downloads</span>
<div class="a" style="left:815px;top:465.500px;width:146.500px;height:1px;background:#d8d8d8"></div>
<svg style="left:983.500px;top:262px" width="7" height="13" viewBox="0 0 7 13"><path d="M5.500 1L1.500 6.500 5.500 12" fill="none" stroke="#d8d8d8" stroke-width="1.100" stroke-linecap="round" stroke-linejoin="round"/></svg>
<svg style="left:1018.500px;top:262px" width="7" height="13" viewBox="0 0 7 13"><path d="M1.500 1L5.500 6.500 1.500 12" fill="none" stroke="#d8d8d8" stroke-width="1.100" stroke-linecap="round" stroke-linejoin="round"/></svg>
<div class="a" style="left:1042.500px;top:254.500px;width:193.500px;height:28.500px;border-radius:7px;background:#ebebeb"></div>
<svg style="left:1053.500px;top:261.500px" width="14" height="14" viewBox="0 0 14 14"><path d="M1.200 7.300L7 1.500l5.800 5.800M2.800 6v6.500h3v-3.800h2.400v3.800h3V6" fill="none" stroke="#3a3a3a" stroke-width="1.400" stroke-linejoin="round" stroke-linecap="round"/><rect x="9" y="8" width="2.300" height="4.500" fill="#3a3a3a"/></svg>
<span class="t" style="left:1073.20px;top:261px;font-size:12.84px;line-height:15px;color:#333;font-weight:700;letter-spacing:-0.385px;">Home</span>
<svg style="left:1219.500px;top:263.500px" width="3" height="11" viewBox="0 0 3 11" fill="#3a3a3a"><circle cx="1.500" cy="1.500" r="1"/><circle cx="1.500" cy="5.300" r="1"/><circle cx="1.500" cy="9.100" r="1"/></svg>
<svg style="left:1249px;top:261.500px" width="15" height="15" viewBox="0 0 15 15" fill="none" stroke="#3a3a3a" stroke-width="1.200"><path d="M1 12V2.500A1.500 1.500 0 0 1 2.500 1h3l1.500 1.700h5.500A1.500 1.500 0 0 1 14 4.200v3"/><circle cx="8" cy="8.500" r="3.900"/><path d="M10.900 11.400l3 3" stroke-linecap="round"/><path d="M1 12a1.500 1.500 0 0 0 1.500 1.500h2" /></svg>
<svg style="left:1285.500px;top:263px" width="12" height="11" viewBox="0 0 12 11"><path d="M4 1.500h8M4 5.500h8M4 9.500h8" stroke="#3a3a3a" stroke-width="1.200"/><rect x="0" y="0.300" width="2.400" height="2.400" fill="#3a3a3a"/><rect x="0" y="4.300" width="2.400" height="2.400" fill="#3a3a3a"/><rect x="0" y="8.300" width="2.400" height="2.400" fill="#3a3a3a"/></svg>
<div class="a" style="left:1305.500px;top:259.500px;width:1px;height:18px;background:#d6d6d6"></div>
<svg style="left:1311.500px;top:266px" width="9" height="6" viewBox="0 0 9 6"><path d="M0.800 1L4.500 4.700 8.200 1" fill="none" stroke="#3a3a3a" stroke-width="1.200" stroke-linecap="round" stroke-linejoin="round"/></svg>
<div class="a" style="left:1336.3px;top:258px;width:21px;height:21px;border-radius:11px;background:#eaeaea"></div>
<div class="a" style="left:1368.5px;top:258px;width:21px;height:21px;border-radius:11px;background:#eaeaea"></div>
<div class="a" style="left:1400.8px;top:258px;width:21px;height:21px;border-radius:11px;background:#eaeaea"></div>
<div class="a" style="left:1343.500px;top:271px;width:6.500px;height:1.200px;background:#3a3a3a"></div>
<div class="a" style="left:1375.500px;top:265px;width:5.600px;height:5.600px;border:1.200px solid #3a3a3a"></div>
<svg style="left:1407.800px;top:265px" width="7" height="7" viewBox="0 0 7 7"><path d="M0.700 0.700l5.600 5.600M6.300 0.700L0.700 6.300" stroke="#3a3a3a" stroke-width="1.300" stroke-linecap="round"/></svg>
<svg style="left:1016.00px;top:320.10px" width="73.200" height="64" viewBox="0 0 74 64" preserveAspectRatio="none"><path d="M0 5a5 5 0 0 1 5-5h19.500c3 0 4.500 1.200 6.500 3.200 1.500 1.500 2.500 2.300 5 2.300H69a5 5 0 0 1 5 5V30H0Z" fill="#b53a1c"/><path d="M0 20.500a5 5 0 0 1 5-5h17.500c3 0 4.800-1 6.800-2.800 1.800-1.700 3-2.700 5.700-2.700H69a5 5 0 0 1 5 5V58.500a5 5 0 0 1-5 5H5a5 5 0 0 1-5-5Z" fill="#b04a22"/><path d="M0 20.500a5 5 0 0 1 5-5h17.500c3 0 4.800-1 6.800-2.800 1.800-1.700 3-2.700 5.700-2.700H69a5 5 0 0 1 5 5V57.300a5 5 0 0 1-5 5H5a5 5 0 0 1-5-5Z" fill="#e15c2c"/><g transform="translate(0,-0.7)"><rect x="24.500" y="24.500" width="25" height="19.500" rx="2.500" fill="none" stroke="#8a2510" stroke-width="2.600"/><rect x="23.200" y="23.200" width="3.500" height="22" rx="1.500" fill="#8a2510"/><path d="M33.500 46h7l1 4h-9z" fill="#8a2510"/><rect x="29.500" y="50" width="15" height="2" rx="1" fill="#8a2510"/></g></svg>
<span class="t" style="left:1028.60px;top:399px;font-size:12.84px;line-height:15px;color:#5c5c5c;letter-spacing:0.156px;">Desktop</span>
<svg style="left:1162.10px;top:320.10px" width="73.200" height="64" viewBox="0 0 74 64" preserveAspectRatio="none"><path d="M0 5a5 5 0 0 1 5-5h19.500c3 0 4.500 1.200 6.500 3.200 1.500 1.500 2.500 2.300 5 2.300H69a5 5 0 0 1 5 5V30H0Z" fill="#b53a1c"/><path d="M0 20.500a5 5 0 0 1 5-5h17.500c3 0 4.800-1 6.800-2.800 1.800-1.700 3-2.700 5.700-2.700H69a5 5 0 0 1 5 5V58.500a5 5 0 0 1-5 5H5a5 5 0 0 1-5-5Z" fill="#b04a22"/><path d="M0 20.500a5 5 0 0 1 5-5h17.500c3 0 4.800-1 6.800-2.800 1.800-1.700 3-2.700 5.700-2.700H69a5 5 0 0 1 5 5V57.300a5 5 0 0 1-5 5H5a5 5 0 0 1-5-5Z" fill="#e15c2c"/><g transform="translate(0,-0.7)"><path d="M26.500 26a2.500 2.500 0 0 1 2.500-2.500h10.500L47.500 31v17a2.500 2.500 0 0 1-2.500 2.500H29a2.500 2.500 0 0 1-2.500-2.500Z" fill="none" stroke="#8a2510" stroke-width="2.200" stroke-linejoin="round"/><path d="M39 23.500v7.500h8.500z" fill="#8a2510"/><path d="M30.500 36h13M30.500 40h13M30.500 44h8.500" stroke="#8a2510" stroke-width="1.800"/></g></svg>
<span class="t" style="left:1165.70px;top:399px;font-size:12.84px;line-height:15px;color:#5c5c5c;letter-spacing:0.139px;">Documents</span>
<svg style="left:1308.20px;top:320.10px" width="73.200" height="64" viewBox="0 0 74 64" preserveAspectRatio="none"><path d="M0 5a5 5 0 0 1 5-5h19.500c3 0 4.500 1.200 6.500 3.200 1.500 1.500 2.500 2.300 5 2.300H69a5 5 0 0 1 5 5V30H0Z" fill="#b53a1c"/><path d="M0 20.500a5 5 0 0 1 5-5h17.500c3 0 4.800-1 6.800-2.800 1.800-1.700 3-2.700 5.700-2.700H69a5 5 0 0 1 5 5V58.500a5 5 0 0 1-5 5H5a5 5 0 0 1-5-5Z" fill="#b04a22"/><path d="M0 20.500a5 5 0 0 1 5-5h17.500c3 0 4.800-1 6.800-2.800 1.800-1.700 3-2.700 5.700-2.700H69a5 5 0 0 1 5 5V57.300a5 5 0 0 1-5 5H5a5 5 0 0 1-5-5Z" fill="#e15c2c"/><g transform="translate(0,-0.7)"><path d="M33 23.500h8v9.500h6L37 43.500 27 33h6z" fill="none" stroke="#8a2510" stroke-width="2" stroke-linejoin="round"/><path d="M26.500 50h21" stroke="#8a2510" stroke-width="2.200"/></g></svg>
<span class="t" style="left:1312.55px;top:399px;font-size:12.84px;line-height:15px;color:#5c5c5c;letter-spacing:0.129px;">Downloads</span>
<svg style="left:1016.00px;top:440.85px" width="73.200" height="64" viewBox="0 0 74 64" preserveAspectRatio="none"><path d="M0 5a5 5 0 0 1 5-5h19.500c3 0 4.500 1.200 6.500 3.200 1.500 1.500 2.500 2.300 5 2.300H69a5 5 0 0 1 5 5V30H0Z" fill="#b53a1c"/><path d="M0 20.500a5 5 0 0 1 5-5h17.500c3 0 4.800-1 6.800-2.800 1.800-1.700 3-2.700 5.700-2.700H69a5 5 0 0 1 5 5V58.500a5 5 0 0 1-5 5H5a5 5 0 0 1-5-5Z" fill="#b04a22"/><path d="M0 20.500a5 5 0 0 1 5-5h17.500c3 0 4.800-1 6.800-2.800 1.800-1.700 3-2.700 5.700-2.700H69a5 5 0 0 1 5 5V57.300a5 5 0 0 1-5 5H5a5 5 0 0 1-5-5Z" fill="#e15c2c"/><g transform="translate(0,-0.7)"><g transform="translate(37 37.5) scale(1.13) translate(-37 -37.5)"><path d="M30 47.500V27.500l13-2.800V44.500" fill="none" stroke="#8a2510" stroke-width="2"/><path d="M30 29.500l13-2.800" stroke="#8a2510" stroke-width="3"/><ellipse cx="27.300" cy="47.500" rx="3.600" ry="3" fill="#8a2510"/><ellipse cx="40.300" cy="44.700" rx="3.600" ry="3" fill="#8a2510"/></g></g></svg>
<span class="t" style="left:1036.10px;top:520px;font-size:12.84px;line-height:15px;color:#5c5c5c;letter-spacing:-0.125px;">Music</span>
<svg style="left:1162.10px;top:440.85px" width="73.200" height="64" viewBox="0 0 74 64" preserveAspectRatio="none"><path d="M0 5a5 5 0 0 1 5-5h19.500c3 0 4.500 1.200 6.500 3.200 1.500 1.500 2.500 2.300 5 2.300H69a5 5 0 0 1 5 5V30H0Z" fill="#b53a1c"/><path d="M0 20.500a5 5 0 0 1 5-5h17.500c3 0 4.800-1 6.800-2.800 1.800-1.700 3-2.700 5.700-2.700H69a5 5 0 0 1 5 5V58.500a5 5 0 0 1-5 5H5a5 5 0 0 1-5-5Z" fill="#b04a22"/><path d="M0 20.500a5 5 0 0 1 5-5h17.500c3 0 4.800-1 6.800-2.800 1.800-1.700 3-2.700 5.700-2.700H69a5 5 0 0 1 5 5V57.300a5 5 0 0 1-5 5H5a5 5 0 0 1-5-5Z" fill="#e15c2c"/><g transform="translate(0,-0.7)"><g transform="translate(37 37.5) scale(1.13) translate(-37 -37.5)"><path d="M20.500 50l10-15 5.500 7 4.500-4.500L48.500 50z" fill="#8a2510"/><circle cx="46.500" cy="27" r="4" fill="#8a2510"/></g></g></svg>
<span class="t" style="left:1175.45px;top:520px;font-size:12.84px;line-height:15px;color:#5c5c5c;letter-spacing:0.022px;">Pictures</span>
<svg style="left:1308.20px;top:440.85px" width="73.200" height="64" viewBox="0 0 74 64" preserveAspectRatio="none"><path d="M0 5a5 5 0 0 1 5-5h19.500c3 0 4.500 1.200 6.500 3.200 1.500 1.500 2.500 2.300 5 2.300H69a5 5 0 0 1 5 5V30H0Z" fill="#b53a1c"/><path d="M0 20.500a5 5 0 0 1 5-5h17.500c3 0 4.800-1 6.800-2.800 1.800-1.700 3-2.700 5.700-2.700H69a5 5 0 0 1 5 5V58.500a5 5 0 0 1-5 5H5a5 5 0 0 1-5-5Z" fill="#b04a22"/><path d="M0 20.500a5 5 0 0 1 5-5h17.500c3 0 4.800-1 6.800-2.800 1.800-1.700 3-2.700 5.700-2.700H69a5 5 0 0 1 5 5V57.300a5 5 0 0 1-5 5H5a5 5 0 0 1-5-5Z" fill="#e15c2c"/><g transform="translate(0,-0.7)"><g transform="translate(37 37.5) scale(1.13) translate(-37 -37.5)"><g fill="none" stroke="#8a2510" stroke-width="2"><circle cx="29" cy="37" r="3.800"/><circle cx="44.500" cy="29" r="3.800"/><circle cx="44.500" cy="45.500" r="3.800"/><path d="M32.500 35.300l8.500-4.500M32.500 38.800l8.500 4.800"/></g></g></g></svg>
<span class="t" style="left:1327.30px;top:520px;font-size:12.84px;line-height:15px;color:#5c5c5c;letter-spacing:0.009px;">Public</span>
<svg style="left:1016.00px;top:561.60px" width="73.200" height="64" viewBox="0 0 74 64" preserveAspectRatio="none"><path d="M0 5a5 5 0 0 1 5-5h19.500c3 0 4.500 1.200 6.500 3.200 1.500 1.500 2.500 2.300 5 2.300H69a5 5 0 0 1 5 5V30H0Z" fill="#b53a1c"/><path d="M0 20.500a5 5 0 0 1 5-5h17.500c3 0 4.800-1 6.800-2.800 1.800-1.700 3-2.700 5.700-2.700H69a5 5 0 0 1 5 5V58.500a5 5 0 0 1-5 5H5a5 5 0 0 1-5-5Z" fill="#b04a22"/><path d="M0 20.500a5 5 0 0 1 5-5h17.500c3 0 4.800-1 6.800-2.800 1.800-1.700 3-2.700 5.700-2.700H69a5 5 0 0 1 5 5V57.300a5 5 0 0 1-5 5H5a5 5 0 0 1-5-5Z" fill="#e15c2c"/><g transform="translate(0,-0.7)"></g></svg>
<span class="t" style="left:1039.35px;top:641px;font-size:12.84px;line-height:15px;color:#5c5c5c;letter-spacing:-0.443px;">snap</span>
<svg style="left:1162.10px;top:561.60px" width="73.200" height="64" viewBox="0 0 74 64" preserveAspectRatio="none"><path d="M0 5a5 5 0 0 1 5-5h19.500c3 0 4.500 1.200 6.500 3.200 1.500 1.500 2.500 2.300 5 2.300H69a5 5 0 0 1 5 5V30H0Z" fill="#b53a1c"/><path d="M0 20.500a5 5 0 0 1 5-5h17.500c3 0 4.800-1 6.800-2.800 1.800-1.700 3-2.700 5.700-2.700H69a5 5 0 0 1 5 5V58.500a5 5 0 0 1-5 5H5a5 5 0 0 1-5-5Z" fill="#b04a22"/><path d="M0 20.500a5 5 0 0 1 5-5h17.500c3 0 4.800-1 6.800-2.800 1.800-1.700 3-2.700 5.700-2.700H69a5 5 0 0 1 5 5V57.300a5 5 0 0 1-5 5H5a5 5 0 0 1-5-5Z" fill="#e15c2c"/><g transform="translate(0,-0.7)"><rect x="27.500" y="23.500" width="8" height="27" fill="none" stroke="#8a2510" stroke-width="2.200"/><path d="M31.500 27h4M33 31h2.500M31.500 35h4M33 39h2.500M31.500 43h4M33 47h2.500" stroke="#8a2510" stroke-width="1.300"/><path d="M40.500 23.500h6v19l-3 8-3-8z" fill="#8a2510"/><rect x="42" y="26" width="3" height="3" fill="#e15c2c"/></g></svg>
<span class="t" style="left:1168.95px;top:641px;font-size:12.84px;line-height:15px;color:#5c5c5c;letter-spacing:0.129px;">Templates</span>
<svg style="left:1308.20px;top:561.60px" width="73.200" height="64" viewBox="0 0 74 64" preserveAspectRatio="none"><path d="M0 5a5 5 0 0 1 5-5h19.500c3 0 4.500 1.200 6.500 3.200 1.500 1.500 2.500 2.300 5 2.300H69a5 5 0 0 1 5 5V30H0Z" fill="#b53a1c"/><path d="M0 20.500a5 5 0 0 1 5-5h17.500c3 0 4.800-1 6.800-2.800 1.800-1.700 3-2.700 5.700-2.700H69a5 5 0 0 1 5 5V58.500a5 5 0 0 1-5 5H5a5 5 0 0 1-5-5Z" fill="#b04a22"/><path d="M0 20.500a5 5 0 0 1 5-5h17.500c3 0 4.800-1 6.800-2.800 1.800-1.700 3-2.700 5.700-2.700H69a5 5 0 0 1 5 5V57.300a5 5 0 0 1-5 5H5a5 5 0 0 1-5-5Z" fill="#e15c2c"/><g transform="translate(0,-0.7)"><rect x="24" y="25" width="27" height="24" fill="none" stroke="#8a2510" stroke-width="2"/><path d="M28.500 25v24M46.500 25v24M28.500 37h18" stroke="#8a2510" stroke-width="2"/><path d="M24 29h4.500M24 33h4.500M24 37h4.500M24 41h4.500M24 45h4.500M46.500 29H51M46.500 33H51M46.500 37H51M46.500 41H51M46.500 45H51" stroke="#8a2510" stroke-width="1.300"/></g></svg>
<span class="t" style="left:1325.05px;top:641px;font-size:12.84px;line-height:15px;color:#5c5c5c;letter-spacing:0.100px;">Videos</span>
</div></div>
<div class="a" style="left:1322.900px;top:34.900px;width:352.100px;height:206.100px;border-radius:15px;background:#fff;box-shadow:0 1px 5px rgba(0,0,0,.22),0 0 0 1px rgba(0,0,0,.06)"></div>
<div class="a" style="left:1340.1px;top:51.500px;width:33px;height:33px;border-radius:17px;background:#e8e8e8"></div>
<div class="a" style="left:1383.5px;top:51.500px;width:33px;height:33px;border-radius:17px;background:#e8e8e8"></div>
<div class="a" style="left:1581.2px;top:51.500px;width:33px;height:33px;border-radius:17px;background:#e8e8e8"></div>
<div class="a" style="left:1624.8px;top:51.500px;width:33px;height:33px;border-radius:17px;background:#e8e8e8"></div>
<svg style="left:1349.500px;top:61px" width="14" height="14" viewBox="0 0 14 14" fill="none" stroke="#3c3c3c" stroke-width="1.100"><path d="M0.600 3.500V2a1.400 1.400 0 0 1 1.400-1.400h1.500M6 0.600h2.500M11 0.600h1a1.400 1.400 0 0 1 1.400 1.400v1M0.600 6v2.500" stroke-linecap="round"/><rect x="4.300" y="6" width="9" height="7" rx="1.300"/><circle cx="8.800" cy="9.600" r="1.700"/><path d="M7.300 6V5h3v1"/></svg>
<svg style="left:1392.500px;top:60.500px" width="15" height="15" viewBox="0 0 15 15"><circle cx="7.500" cy="7.500" r="5.600" fill="none" stroke="#3c3c3c" stroke-width="2.600" stroke-dasharray="2.930 1.470"/><circle cx="7.500" cy="7.500" r="4.500" fill="none" stroke="#3c3c3c" stroke-width="1.600"/><circle cx="7.500" cy="7.500" r="2.100" fill="none" stroke="#3c3c3c" stroke-width="1"/></svg>
<svg style="left:1591.500px;top:60.500px" width="12.500" height="15" viewBox="0 0 12.500 15" fill="none" stroke="#3c3c3c" stroke-width="1.300"><rect x="1" y="6.500" width="10.500" height="7.700" rx="1.300"/><path d="M3 6.500V4.200a3.250 3.250 0 0 1 6.500 0v2.300"/><rect x="5.400" y="9.300" width="1.700" height="2.300" fill="#3c3c3c" stroke="none"/></svg>
<svg style="left:1634.500px;top:61px" width="14" height="14" viewBox="0 0 14 14" fill="none" stroke="#3c3c3c" stroke-width="1.300" stroke-linecap="round"><path d="M4.200 2.600a5.600 5.600 0 1 0 5.600 0"/><path d="M7 0.700v5.300"/></svg>
<svg style="left:1345.500px;top:101px" width="15" height="13" viewBox="0 0 15 13" fill="#3c3c3c"><path d="M0.500 4.300h2.300L6.300 1v11L2.800 8.700H0.500z"/><path d="M8 4.300a3.200 3.200 0 0 1 0 4.400" fill="none" stroke="#3c3c3c" stroke-width="1.100"/><path d="M9.900 2.500a5.700 5.700 0 0 1 0 8" fill="none" stroke="#9a9a9a" stroke-width="1.100"/></svg>
<div class="a" style="left:1374.500px;top:106px;width:278px;height:3.200px;border-radius:2px;background:#e6e6e6"></div>
<div class="a" style="left:1374.500px;top:106px;width:240px;height:3.200px;border-radius:2px;background:#cf4d20"></div>
<div class="a" style="left:1606px;top:100.500px;width:14px;height:14px;border-radius:7px;background:#1d1d1d"></div>
<div class="a" style="left:1339.800px;top:130.500px;width:153.700px;height:41.500px;border-radius:14.500px;background:#d34a1c;overflow:hidden"><div class="a" style="left:121.500px;top:0;width:1px;height:42px;background:#e0764f"></div><div class="a" style="left:122.500px;top:0;width:32px;height:42px;background:#cf481b"></div></div>
<svg style="left:1352px;top:144.500px" width="14.500" height="13.500" viewBox="0 0 16 15" fill="#fff"><rect x="6" y="1" width="4" height="4" rx="1"/><rect x="1.300" y="9.500" width="4.600" height="4.200" rx="0.800"/><rect x="10.100" y="9.500" width="4.600" height="4.200" rx="0.800"/><path d="M7.500 5h1v2.300h4.600v2.400h-1V8.300H3.900v1.400h-1V7.300h4.600z"/></svg>
<span class="t" style="left:1374.70px;top:144px;font-size:12.84px;line-height:15px;color:#fff;font-weight:700;letter-spacing:-0.008px;">Wired</span>
<svg style="left:1474.500px;top:145px" width="7" height="13" viewBox="0 0 7 13"><path d="M1.500 1L5.500 6.500 1.500 12" fill="none" stroke="#fff" stroke-width="1.200" stroke-linecap="round" stroke-linejoin="round"/></svg>
<div class="a" style="left:1504.700px;top:130.500px;width:153.500px;height:41.500px;border-radius:14.500px;background:#e6e6e6"></div>
<svg style="left:1516.500px;top:144px" width="14.500" height="14.500" viewBox="0 0 15 15" fill="none" stroke="#3c3c3c" stroke-width="1.300" stroke-linecap="round"><path d="M4.200 12.500A6.300 6.300 0 1 1 10.800 12.500"/><path d="M7.500 3.500v4.500"/><circle cx="7.500" cy="8.300" r="1.200" fill="#3c3c3c" stroke="none"/></svg>
<span class="t" style="left:1539.30px;top:137px;font-size:12.84px;line-height:15px;color:#3d3d3d;font-weight:700;letter-spacing:-0.140px;">Power Mode</span>
<span class="t" style="left:1539.30px;top:153px;font-size:10.8px;line-height:12px;color:#444;letter-spacing:-0.219px;">Balanced</span>
<div class="a" style="left:1339.800px;top:183px;width:153.700px;height:41.500px;border-radius:14.500px;background:#e6e6e6"></div>
<svg style="left:1352.500px;top:197px" width="14" height="14" viewBox="0 0 14 14"><circle cx="7" cy="7" r="6" fill="none" stroke="#3c3c3c" stroke-width="1.400"/><path d="M7 2.500a4.500 4.500 0 0 0 0 9z" fill="#3c3c3c"/></svg>
<span class="t" style="left:1374.70px;top:196px;font-size:12.84px;line-height:15px;color:#3d3d3d;font-weight:700;letter-spacing:-0.307px;">Dark Style</span>
<div class="a" style="left:1504.700px;top:183px;width:153.500px;height:41.500px;border-radius:14.500px;background:#e6e6e6"></div>
<svg style="left:1517px;top:196.500px" width="14" height="15" viewBox="0 0 14 15" fill="none" stroke="#3c3c3c" stroke-width="1.200" stroke-linecap="round"><path d="M3.500 10.500V7a3.800 3.800 0 0 1 6.500-2.700M10.800 7v3.500l1 1H4.500"/><path d="M5.800 13.300h2.400"/><path d="M12.300 1.800L1.800 12.800"/></svg>
<span class="t" style="left:1539.30px;top:196px;font-size:12.84px;line-height:15px;color:#3d3d3d;font-weight:700;letter-spacing:-0.092px;">Do Not Disturb</span>
</div></body></html>
